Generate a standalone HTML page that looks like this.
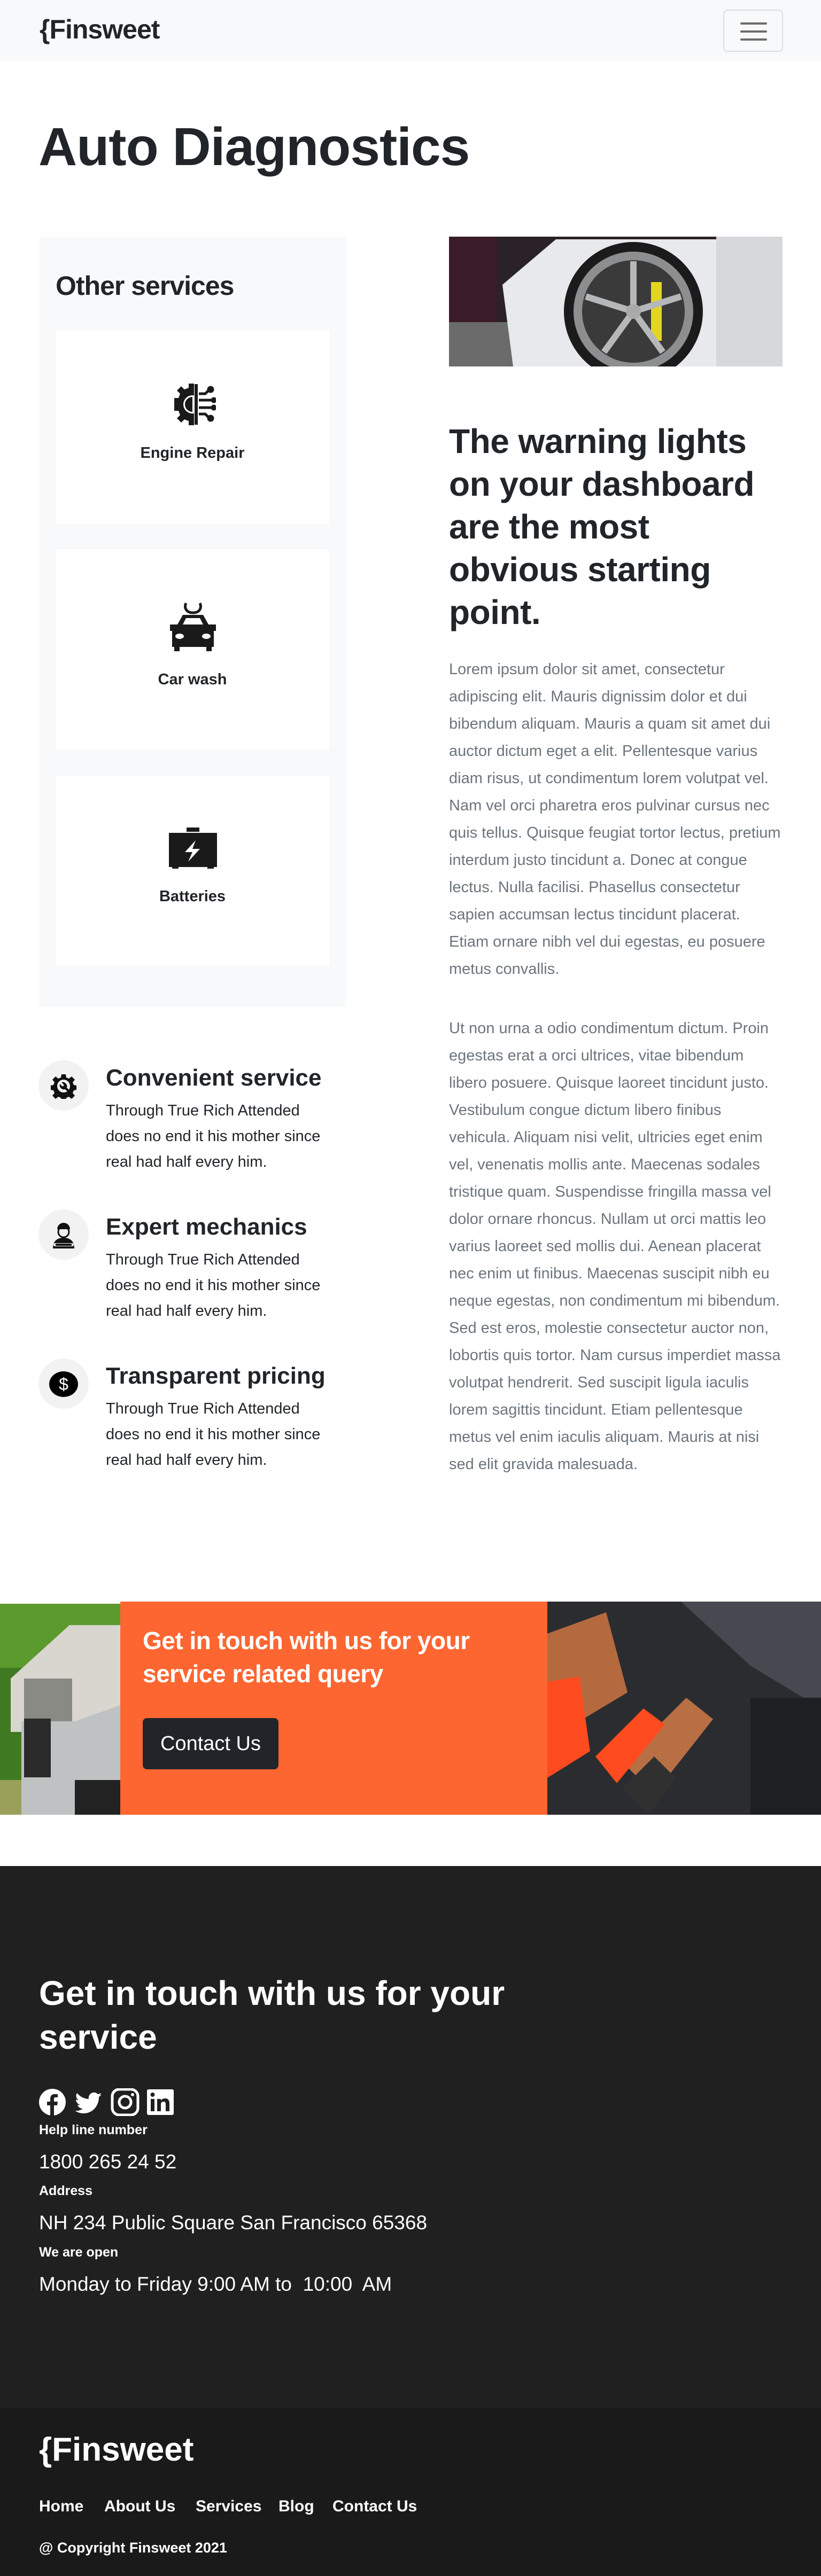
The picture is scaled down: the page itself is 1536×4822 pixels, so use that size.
<!DOCTYPE html>
<html><head><meta charset="utf-8">
<style>
*{margin:0;padding:0;box-sizing:border-box}
body{width:1536px;height:4822px;position:relative;font-family:"Liberation Sans",sans-serif;color:#212529;background:#fff;overflow:hidden}
.a{position:absolute}
.nav{left:0;top:0;width:1536px;height:114px;background:#f8f9fa}
.logo{font-weight:bold;font-size:50px;letter-spacing:-1px}
.tog{left:1353px;top:18px;width:112px;height:79px;border:2px solid #dcdcdc;border-radius:8px}
.tog i{position:absolute;left:30px;width:50px;height:4px;background:#6b6b6b;border-radius:2px}
.side{left:74px;top:443px;width:573px;height:1442px;background:#f8f9fa}
.card{left:104px;width:512px;background:#fff}
.card .lbl{position:absolute;left:0;width:512px;text-align:center;font-size:29px;font-weight:bold;color:#212529}
.feat .c{position:absolute;left:72px;width:94px;height:94px;border-radius:50%;background:#f2f2f2}
.feat h3{position:absolute;left:198px;font-size:44px;font-weight:bold;white-space:nowrap}
.feat p{position:absolute;left:198px;font-size:29px;line-height:48px;color:#212529;white-space:nowrap}
.para{left:840px;width:624px;font-size:29px;line-height:51px;color:#6c757d}
</style></head><body>
<div class="a nav"></div>
<div class="a logo" style="left:74px;top:26px">{Finsweet</div>
<div class="a tog"><i style="top:22px"></i><i style="top:37px"></i><i style="top:52px"></i></div>

<div class="a" style="left:72px;top:220px;font-size:100px;font-weight:bold;letter-spacing:-1px;line-height:110px">Auto Diagnostics</div>

<div class="a side"></div>
<div class="a" style="left:104px;top:506px;font-size:50px;font-weight:bold;letter-spacing:-1px">Other services</div>

<div class="a card" style="top:618px;height:362px">
 <svg class="a" style="left:214px;top:97px" width="86" height="84" viewBox="0 0 86 84"><path d="M8 30h8l3-8-6-6 8-8 6 6 8-3V3h10v78H35v-8l-8-3-6 6-8-8 6-6-3-8H8z" fill="#1a1a1a"/><circle cx="42" cy="42" r="17" fill="#fff"/><path d="M42 28a14 14 0 0 0 0 28z" fill="#1a1a1a"/><rect x="46" y="4" width="6" height="76" fill="#1a1a1a"/><g stroke="#1a1a1a" stroke-width="5" fill="#1a1a1a"><path d="M54 22h12l6-6M54 34h26M54 48h26M54 60h12l6 6" fill="none"/><circle cx="76" cy="14" r="4"/><circle cx="82" cy="34" r="3"/><circle cx="82" cy="48" r="3"/><circle cx="76" cy="68" r="4"/></g></svg>
 <div class="lbl" style="top:214px">Engine Repair</div>
</div>
<div class="a card" style="top:1028px;height:375px">
 <svg class="a" style="left:212px;top:97px" width="90" height="98" viewBox="0 0 90 98"><path d="M32 4c-4 8 0 18 13 18s17-10 13-18" fill="none" stroke="#1a1a1a" stroke-width="5"/><path d="M16 44l10-18h38l10 18h14v12h-4v30h-4v8H70v-8H20v8H10v-8H6V56H2V44z" fill="#1a1a1a"/><path d="M26 44l6-12h26l6 12z" fill="#fff"/><ellipse cx="20" cy="66" rx="8" ry="5" fill="#fff"/><ellipse cx="70" cy="66" rx="8" ry="5" fill="#fff"/></svg>
 <div class="lbl" style="top:228px">Car wash</div>
</div>
<div class="a card" style="top:1452px;height:356px">
 <svg class="a" style="left:212px;top:97px" width="90" height="78" viewBox="0 0 90 78"><rect x="33" y="0" width="24" height="8" fill="#1a1a1a"/><rect x="0" y="10" width="90" height="64" fill="#1a1a1a"/><rect x="6" y="72" width="12" height="5" fill="#1a1a1a"/><rect x="72" y="72" width="12" height="5" fill="#1a1a1a"/><path d="M50 24L30 46h14l-8 18 22-24H44z" fill="#fff"/></svg>
 <div class="lbl" style="top:210px">Batteries</div>
</div>

<div class="a feat" style="top:1985px;left:0;width:700px;height:900px">
 <div class="c" style="top:0"></div>
 <svg class="a" style="left:95px;top:24px" width="48" height="48" viewBox="0 0 48 48"><path d="M20 2h8l1 6 5 2 5-4 6 6-4 5 2 5 6 1v8l-6 1-2 5 4 5-6 6-5-4-5 2-1 6h-8l-1-6-5-2-5 4-6-6 4-5-2-5-6-1v-8l6-1 2-5-4-5 6-6 5 4 5-2z" fill="#111"/><circle cx="24" cy="24" r="12" fill="#f2f2f2"/><path d="M17 20a8 8 0 0 0 10 10l6 6 3-3-6-6a8 8 0 0 0-10-10l5 5-3 3z" fill="#111"/></svg>
 <h3 style="top:8px">Convenient service</h3>
 <p style="top:70px">Through True Rich Attended<br>does no end it his mother since<br>real had half every him.</p>

 <div class="c" style="top:279px"></div>
 <svg class="a" style="left:96px;top:300px" width="46" height="56" viewBox="0 0 46 56"><path d="M11 16a12 12 0 0 1 24 0z" fill="#111"/><circle cx="23" cy="21" r="10" fill="none" stroke="#111" stroke-width="3"/><path d="M3 52c0-14 8-20 20-20s20 6 20 20z" fill="#111"/><rect x="4" y="42" width="38" height="6" rx="3" fill="#f2f2f2"/><rect x="8" y="43" width="30" height="4" fill="#111"/></svg>
 <h3 style="top:287px">Expert mechanics</h3>
 <p style="top:349px">Through True Rich Attended<br>does no end it his mother since<br>real had half every him.</p>

 <div class="c" style="top:558px"></div>
 <svg class="a" style="left:91px;top:581px" width="56" height="50" viewBox="0 0 56 50"><ellipse cx="28" cy="25" rx="27" ry="24" fill="#000"/><text x="28" y="36" text-anchor="middle" font-family="Liberation Sans" font-size="32" fill="#fff">$</text></svg>
 <h3 style="top:566px">Transparent pricing</h3>
 <p style="top:628px">Through True Rich Attended<br>does no end it his mother since<br>real had half every him.</p>
</div>

<svg class="a" style="left:840px;top:443px" width="624" height="243" viewBox="0 0 624 243"><rect width="624" height="243" fill="#2a2226"/><rect x="0" y="0" width="90" height="243" fill="#3a1c28"/><rect x="0" y="160" width="140" height="83" fill="#6b6b6b"/><path d="M120 243L100 90 200 5h424v243z" fill="#e8e9ec"/><path d="M500 0h124v243H500z" fill="#d6d8dc"/><circle cx="345" cy="140" r="130" fill="#1b1b1b"/><circle cx="345" cy="140" r="112" fill="#8d8e90"/><circle cx="345" cy="140" r="96" fill="#3a3a3a"/><path d="M378 85h20v110h-20z" fill="#e2d622"/><g stroke="#b6b7b9" stroke-width="12"><path d="M345 140L345 46M345 140L434 112M345 140L400 216M345 140L290 216M345 140L256 112"/></g><circle cx="345" cy="140" r="14" fill="#aaa"/></svg>

<div class="a" style="left:840px;top:786px;width:640px;font-size:64px;font-weight:bold;line-height:80px;letter-spacing:-0.5px;white-space:nowrap">The warning lights<br>on your dashboard<br>are the most<br>obvious starting<br>point.</div>

<div class="a para" style="top:1228px">Lorem ipsum dolor sit amet, consectetur adipiscing elit. Mauris dignissim dolor et dui bibendum aliquam. Mauris a quam sit amet dui auctor dictum eget a elit. Pellentesque varius diam risus, ut condimentum lorem volutpat vel. Nam vel orci pharetra eros pulvinar cursus nec quis tellus. Quisque feugiat tortor lectus, pretium interdum justo tincidunt a. Donec at congue lectus. Nulla facilisi. Phasellus consectetur sapien accumsan lectus tincidunt placerat. Etiam ornare nibh vel dui egestas, eu posuere metus convallis.</div>
<div class="a para" style="top:1900px">Ut non urna a odio condimentum dictum. Proin egestas erat a orci ultrices, vitae bibendum libero posuere. Quisque laoreet tincidunt justo. Vestibulum congue dictum libero finibus vehicula. Aliquam nisi velit, ultricies eget enim vel, venenatis mollis ante. Maecenas sodales tristique quam. Suspendisse fringilla massa vel dolor ornare rhoncus. Nullam ut orci mattis leo varius laoreet sed mollis dui. Aenean placerat nec enim ut finibus. Maecenas suscipit nibh eu neque egestas, non condimentum mi bibendum. Sed est eros, molestie consectetur auctor non, lobortis quis tortor. Nam cursus imperdiet massa volutpat hendrerit. Sed suscipit ligula iaculis lorem sagittis tincidunt. Etiam pellentesque metus vel enim iaculis aliquam. Mauris at nisi sed elit gravida malesuada.</div>

<!-- CTA -->
<svg class="a" style="left:0;top:3002px" width="225" height="395" viewBox="0 0 225 395"><rect width="225" height="395" fill="#3f7a22"/><rect x="0" y="0" width="225" height="120" fill="#5b9a2c"/><path d="M20 140L130 40h95v200H20z" fill="#d8d6cf"/><rect x="45" y="140" width="90" height="150" fill="#8a8a84"/><rect x="0" y="330" width="225" height="65" fill="#9aa05a"/><path d="M40 220h100l85-30v205H40z" fill="#bfc2c2"/><rect x="45" y="215" width="50" height="110" fill="#2a2a2a"/><rect x="140" y="330" width="85" height="65" fill="#222"/></svg>
<div class="a" style="left:225px;top:2998px;width:799px;height:399px;background:#fe6631"></div>
<div class="a" style="left:267px;top:3040px;width:740px;font-size:46px;font-weight:bold;line-height:62px;color:#fff;letter-spacing:-0.5px">Get in touch with us for your service related query</div>
<div class="a" style="left:267px;top:3216px;width:254px;height:96px;background:#212529;border-radius:8px;color:#fff;font-size:38px;line-height:96px;text-align:center">Contact Us</div>
<svg class="a" style="left:1024px;top:2998px" width="512" height="399" viewBox="0 0 512 399"><rect width="512" height="399" fill="#2b2c30"/><path d="M250 0h262v200L380 120z" fill="#46494f"/><path d="M0 60l110-40 40 150L0 260z" fill="#b46a3e"/><path d="M140 300l120-120 50 40-110 140z" fill="#b86f44"/><path d="M0 150l60-10 20 140L0 330z" fill="#ff4b1f"/><path d="M90 290l90-90 40 30-90 110z" fill="#ff4b1f"/><path d="M140 350l60-60 40 40-50 69z" fill="#303030"/><rect x="380" y="180" width="132" height="219" fill="#1e1f22"/></svg>

<!-- footer -->
<div class="a" style="left:0;top:3493px;width:1536px;height:1015px;background:#212021"></div>
<div class="a" style="left:0;top:4508px;width:1536px;height:314px;background:#1b1a1a"></div>
<div class="a" style="left:73px;top:3690px;width:960px;font-size:64px;font-weight:bold;line-height:82px;color:#fff">Get in touch with us for your service</div>
<svg class="a" style="left:73px;top:3909px" width="260" height="52" viewBox="0 0 260 52" fill="#fff">
 <circle cx="25" cy="26" r="25"/><path d="M28 51V32h6l1-7h-7v-5c0-2 1-3 3-3h4v-6h-6c-6 0-8 4-8 9v5h-6v7h6v19z" fill="#212021"/>
 <path d="M118 12c-2 1-4 1-6 2 2-1 4-3 4-5-2 1-4 2-6 2a10 10 0 0 0-17 9C84 20 76 15 71 9c-3 5-1 11 3 13-2 0-3 0-5-1 0 5 4 9 8 10-2 0-3 1-5 0 1 4 5 7 10 7-4 3-9 5-15 4 5 3 10 5 16 5 19 0 29-16 29-30v-1c2-1 4-3 6-4z"/>
 <rect x="137" y="2" width="48" height="48" rx="13" fill="none" stroke="#fff" stroke-width="5"/><circle cx="161" cy="26" r="11" fill="none" stroke="#fff" stroke-width="5"/><circle cx="175" cy="12" r="3"/>
 <rect x="202" y="2" width="50" height="48" rx="3"/><rect x="209" y="20" width="7" height="23" fill="#212021"/><circle cx="212.5" cy="12" r="4" fill="#212021"/><path d="M221 20h7v3c2-3 5-4 8-4 6 0 8 4 8 10v14h-7V30c0-3-1-5-4-5s-5 2-5 5v13h-7z" fill="#212021"/>
</svg>
<div class="a" style="left:73px;top:3973px;font-size:25px;font-weight:bold;color:#fff">Help line number</div>
<div class="a" style="left:73px;top:4026px;font-size:37px;color:#fff">1800 265 24 52</div>
<div class="a" style="left:73px;top:4087px;font-size:25px;font-weight:bold;color:#fff">Address</div>
<div class="a" style="left:73px;top:4140px;font-size:37px;color:#fff">NH 234 Public Square San Francisco 65368</div>
<div class="a" style="left:73px;top:4202px;font-size:25px;font-weight:bold;color:#fff">We are open</div>
<div class="a" style="left:73px;top:4255px;font-size:37px;color:#fff;white-space:pre">Monday to Friday 9:00 AM to  10:00  AM</div>

<div class="a" style="left:73px;top:4550px;font-size:62px;font-weight:bold;color:#fff">{Finsweet</div>
<div class="a" style="top:4675px;left:0;font-size:30px;font-weight:bold;color:#fff;white-space:nowrap">
 <span class="a" style="left:73px">Home</span><span class="a" style="left:195px">About Us</span><span class="a" style="left:366px">Services</span><span class="a" style="left:521px">Blog</span><span class="a" style="left:622px">Contact Us</span>
</div>
<div class="a" style="left:73px;top:4754px;font-size:27px;font-weight:bold;color:#fff">@ Copyright Finsweet 2021</div>
</body></html>
